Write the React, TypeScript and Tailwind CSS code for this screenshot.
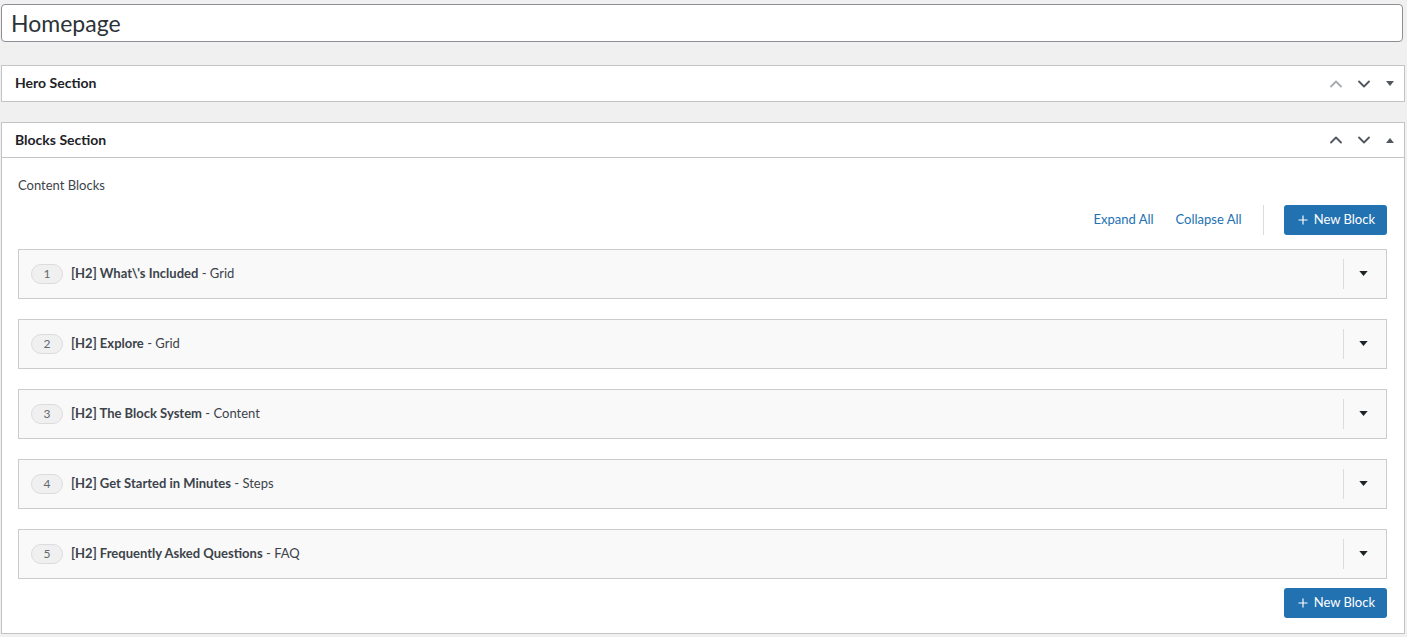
import { ChevronUp, ChevronDown, Plus } from "lucide-react"

const blocks = [
  { title: "[H2] What\\'s Included", type: "Grid" },
  { title: "[H2] Explore", type: "Grid" },
  { title: "[H2] The Block System", type: "Content" },
  { title: "[H2] Get Started in Minutes", type: "Steps" },
  { title: "[H2] Frequently Asked Questions", type: "FAQ" },
]

function Caret({ up = false, className = "" }: { up?: boolean; className?: string }) {
  return (
    <svg width="10" height="6" viewBox="0 0 10 6" className={className}>
      {up ? <path d="M0 6 L5 0 L10 6 Z" fill="currentColor" /> : <path d="M0 0 L10 0 L5 6 Z" fill="currentColor" />}
    </svg>
  )
}

function SectionHeader({ title, open }: { title: string; open: boolean }) {
  return (
    <div className={`flex items-center h-[35px] pl-[13px] pr-[10px] ${open ? "border-b border-[#c3c4c7]" : ""}`}>
      <h2 className="flex-1 text-[14px] font-bold text-[#1d2327] pb-[2px]">{title}</h2>
      <div className="flex items-center gap-[8px]">
        <ChevronUp className={`w-[20px] h-[20px] ${open ? "text-[#50575e]" : "text-[#a7aaad]"}`} strokeWidth={2.2} />
        <ChevronDown className="w-[20px] h-[20px] text-[#50575e]" strokeWidth={2.2} />
        <Caret up={open} className="w-[8px] h-[5px] text-[#50575e] ml-[4px]" />
      </div>
    </div>
  )
}

function NewBlockButton() {
  return (
    <button className="h-[30px] px-[12px] rounded-[3px] bg-[#2271b1] text-white text-[13px] flex items-center gap-[4px]">
      <Plus className="w-[14px] h-[14px]" strokeWidth={2} />
      New Block
    </button>
  )
}

export default function App() {
  return (
    <div className="min-h-screen bg-[#f0f0f1] pt-[4px] pl-[1px] pr-[2px] font-['Lato','Open_Sans',sans-serif] text-[#3c434a]">
      <div className="h-[38px] bg-white border border-[#8c8f94] rounded-[4px] flex items-center pl-[9px] mr-[2px]">
        <span className="text-[23px] text-[#2c3338] leading-none">Homepage</span>
      </div>

      <div className="mt-[23px] bg-white border border-[#c3c4c7]">
        <SectionHeader title="Hero Section" open={false} />
      </div>

      <div className="mt-[20px] bg-white border border-[#c3c4c7]">
        <SectionHeader title="Blocks Section" open={true} />
        <div className="pl-[16px] pr-[17px] pt-[18px] pb-[15px]">
          <div className="text-[13px] text-[#3c434a]">Content Blocks</div>
          <div className="flex items-center justify-end mt-[9px]">
            <button className="text-[13px] text-[#2271b1] mr-[22px]">Expand All</button>
            <button className="text-[13px] text-[#2271b1]">Collapse All</button>
            <div className="w-px h-[30px] bg-[#dcdcde] ml-[21px] mr-[20px]" />
            <NewBlockButton />
          </div>
          <div className="mt-[14px] flex flex-col gap-[20px]">
            {blocks.map((b, i) => (
              <div key={i} className="h-[50px] bg-[#f9f9f9] border border-[#ccc] flex items-center pl-[12px]">
                <span className="w-[32px] h-[20px] rounded-full bg-[#f0f0f1] border border-[#dcdcde] flex items-center justify-center text-[12px] text-[#646970]">
                  {i + 1}
                </span>
                <span className="ml-[8px] text-[13px] text-[#3c434a]">
                  <strong className="font-bold">{b.title}</strong> - {b.type}
                </span>
                <div className="ml-auto flex items-center h-full pr-[4px]">
                  <div className="w-px h-[30px] bg-[#dcdcde]" />
                  <div className="w-[38px] flex justify-center">
                    <Caret className="w-[9px] h-[5px] text-[#1d2327]" />
                  </div>
                </div>
              </div>
            ))}
          </div>
          <div className="flex justify-end mt-[9px]">
            <NewBlockButton />
          </div>
        </div>
      </div>
    </div>
  )
}
